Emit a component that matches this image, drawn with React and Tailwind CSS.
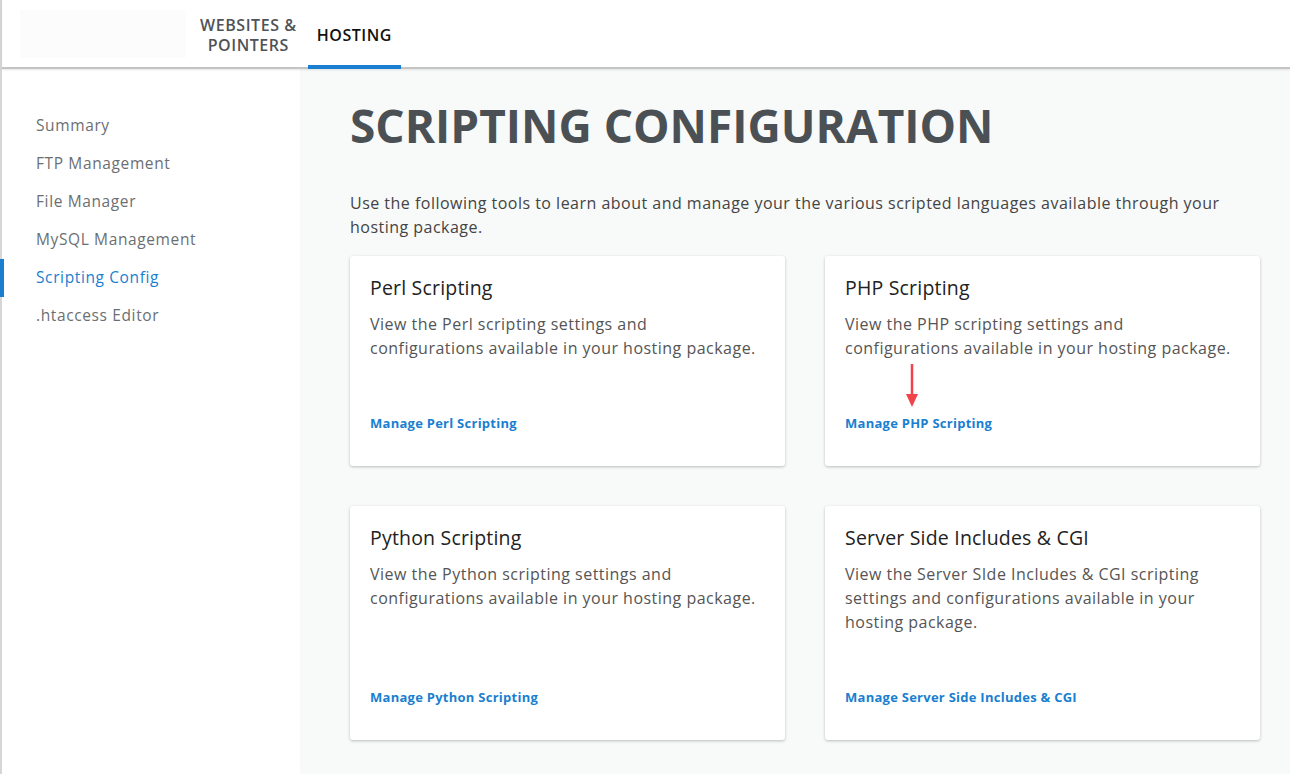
import React from 'react';

const navItems = [
  { label: 'Summary' },
  { label: 'FTP Management' },
  { label: 'File Manager' },
  { label: 'MySQL Management' },
  { label: 'Scripting Config', active: true },
  { label: '.htaccess Editor' },
];

const cards = [
  {
    title: 'Perl Scripting',
    desc: 'View the Perl scripting settings and configurations available in your hosting package.',
    link: 'Manage Perl Scripting',
  },
  {
    title: 'PHP Scripting',
    desc: 'View the PHP scripting settings and configurations available in your hosting package.',
    link: 'Manage PHP Scripting',
    arrow: true,
  },
  {
    title: 'Python Scripting',
    desc: 'View the Python scripting settings and configurations available in your hosting package.',
    link: 'Manage Python Scripting',
  },
  {
    title: 'Server Side Includes & CGI',
    desc: 'View the Server SIde Includes & CGI scripting settings and configurations available in your hosting package.',
    link: 'Manage Server Side Includes & CGI',
  },
];

function Card({ card }) {
  return (
    <div className="relative bg-white rounded-[3px] shadow-[0_1px_3px_rgba(0,0,0,0.25)] flex flex-col px-5 pt-[18px] pb-[32px]">
      <h3 className="text-[19.5px] leading-7 text-[#222] tracking-[0.01em]">{card.title}</h3>
      <p className="mt-[10px] text-[16px] leading-6 text-[#555] tracking-[0.03em] pr-[6px]">{card.desc}</p>
      <div className="mt-auto pt-[50px]">
        <a href="#" className="text-[13px] leading-[18px] font-bold text-[#1a7fd0] tracking-[0.02em]">{card.link}</a>
      </div>
      {card.arrow && (
        <svg className="absolute left-[81px] top-[108px]" width="12" height="44" viewBox="0 0 12 44">
          <line x1="6" y1="0" x2="6" y2="32" stroke="#f0434a" strokeWidth="2.5" />
          <polygon points="0,30 12,30 6,43" fill="#f0434a" />
        </svg>
      )}
    </div>
  );
}

export default function App() {
  return (
    <div className="min-h-screen flex flex-col bg-white border-l-2 border-[#d6d6d6]" style={{ fontFamily: '"Open Sans", "Liberation Sans", sans-serif' }}>
      {/* Top tabs */}
      <header className="h-[69px] flex items-stretch border-b-2 border-[#c4c4c4] shadow-[0_1px_2px_rgba(0,0,0,0.1)] relative z-10 bg-white">
        <div className="w-[166px] h-[48px] mt-[10px] ml-[18px] bg-[#fcfcfc]" />
        <nav className="flex items-stretch ml-[6px]">
          <a href="#" className="pl-[8px] pr-[11px] flex items-center text-center text-[16px] leading-[20px] font-semibold text-[#4f5357] tracking-[0.035em] pt-[2px]">
            WEBSITES &amp;<br />POINTERS
          </a>
          <a href="#" className="px-[9px] flex items-center text-[16px] font-semibold text-[#111] border-b-4 border-[#1a7fd0] -mb-[2px] pt-[4px] tracking-[0.035em]">
            HOSTING
          </a>
        </nav>
      </header>

      <div className="flex flex-1">
        {/* Sidebar */}
        <aside className="w-[298px] pt-[38px] bg-white">
          <ul className="flex flex-col">
            {navItems.map((item) => (
              <li
                key={item.label}
                className={
                  'h-[38px] flex items-center pl-[32px] text-[15.5px] tracking-[0.04em] -ml-[2px] border-l-4 ' +
                  (item.active ? 'border-[#1a7fd0] text-[#1a7fd0]' : 'border-transparent text-[#6b6f73]')
                }
              >
                {item.label}
              </li>
            ))}
          </ul>
        </aside>

        {/* Main content */}
        <main className="flex-1 bg-[#f8f9f9] pl-[50px] pr-[30px] pt-[26px] pb-[36px]">
          <h1 className="text-[46px] leading-[60px] font-bold text-[#4b5055]">SCRIPTING CONFIGURATION</h1>
          <p className="mt-[36px] text-[16px] leading-6 text-[#444] tracking-[0.03em]">
            Use the following tools to learn about and manage your the various scripted languages available through your hosting package.
          </p>
          <div className="mt-[17px] grid grid-cols-2 gap-10">
            {cards.map((c) => (
              <Card key={c.title} card={c} />
            ))}
          </div>
        </main>
      </div>
    </div>
  );
}
